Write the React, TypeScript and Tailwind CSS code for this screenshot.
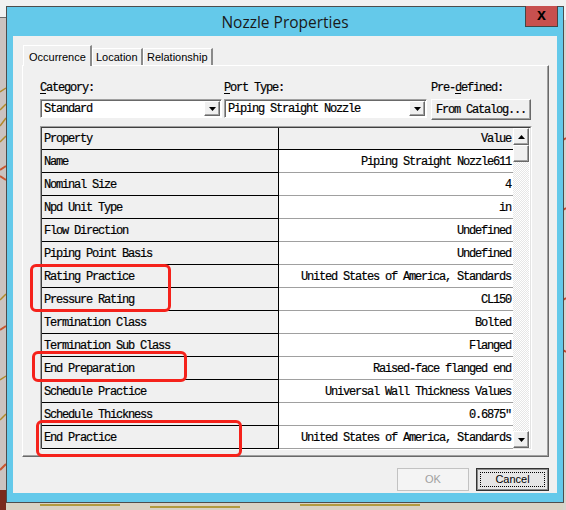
import React from 'react'

type Row = { name: string; value: string }

const rows: Row[] = [
  { name: 'Name', value: 'Piping Straight Nozzle611' },
  { name: 'Nominal Size', value: '4' },
  { name: 'Npd Unit Type', value: 'in' },
  { name: 'Flow Direction', value: 'Undefined' },
  { name: 'Piping Point Basis', value: 'Undefined' },
  { name: 'Rating Practice', value: 'United States of America, Standards' },
  { name: 'Pressure Rating', value: 'CL150' },
  { name: 'Termination Class', value: 'Bolted' },
  { name: 'Termination Sub Class', value: 'Flanged' },
  { name: 'End Preparation', value: 'Raised-face flanged end' },
  { name: 'Schedule Practice', value: 'Universal Wall Thickness Values' },
  { name: 'Schedule Thickness', value: '0.6875″' },
  { name: 'End Practice', value: 'United States of America, Standards' },
]

const mono = 'font-[Liberation_Mono,Courier_New,monospace] text-[12px] tracking-[-1.2px] text-black [-webkit-text-stroke:0.2px_black]'
const ui = 'font-[Liberation_Sans,Arial,sans-serif]'
const raised = 'border border-t-white border-l-white border-r-[#696969] border-b-[#696969] shadow-[inset_-1px_-1px_0_#a0a0a0] bg-[#f0f0f0]'
const sunken = 'border border-t-[#a0a0a0] border-l-[#a0a0a0] border-r-white border-b-white shadow-[inset_1px_1px_0_#696969] bg-white'

function Arrow({ up }: { up?: boolean }) {
  return (
    <svg width="7" height="4" viewBox="0 0 7 4">
      <path d={up ? 'M0 4 L3.5 0 L7 4 Z' : 'M0 0 L7 0 L3.5 4 Z'} fill="#000" />
    </svg>
  )
}

function Combo({ text, width }: { text: string; width: string }) {
  return (
    <div className={`${width} h-[19px] flex items-center ${sunken}`}>
      <span className={`flex-1 pl-[3px] leading-none ${mono}`}>{text}</span>
      <span className={`w-[16px] h-[15px] mr-[1px] flex items-center justify-center ${raised}`}>
        <Arrow />
      </span>
    </div>
  )
}

function Scrollbar() {
  return (
    <div className="w-[16px] flex flex-col">
      <div className={`h-[17px] flex items-center justify-center ${raised}`}><Arrow up /></div>
      <div className={`h-[17px] ${raised}`} />
      <div className="flex-1 bg-[repeating-conic-gradient(#ffffff_0_25%,#e6e6e6_0_50%)] bg-[length:2px_2px]" />
      <div className={`h-[17px] flex items-center justify-center ${raised}`}><Arrow /></div>
    </div>
  )
}

function PropertyGrid() {
  return (
    <div className="mt-[6px] w-[492px] h-[324px] border border-t-[#a0a0a0] border-l-[#a0a0a0] border-r-white border-b-white">
      <div className="flex h-full border border-t-[#404040] border-l-[#404040] border-r-[#e3e3e3] border-b-[#e3e3e3] bg-white">
        <div className="w-[471px]">
          <div className={`flex h-[22px] border-b border-black ${mono}`}>
            <div className="w-[237px] border-r border-black bg-[#f0f0f0] flex items-center pl-[2px] pt-[1px]">Property</div>
            <div className="flex-1 bg-[#f0f0f0] flex items-center justify-end pr-[2px] pt-[1px]">Value</div>
          </div>
          {rows.map(row => (
            <div key={row.name} className={`flex h-[23px] ${mono}`}>
              <div className="w-[237px] border-r border-b border-black bg-[#f0f0f0] flex items-center pl-[2px] pt-[1px] whitespace-pre">{row.name}</div>
              <div className="flex-1 border-b border-[#a0a0a0] bg-white flex items-center justify-end pr-[2px] pt-[1px] whitespace-pre">{row.value}</div>
            </div>
          ))}
        </div>
        <Scrollbar />
      </div>
    </div>
  )
}

function Backdrop() {
  return (
    <svg className="absolute inset-0" width="566" height="510" viewBox="0 0 566 510">
      <rect width="566" height="510" fill="#f1f1f1" />
      <rect x="0" y="17" width="6" height="493" fill="#cbc3c0" />
      <line x1="0" y1="17.5" x2="6" y2="17.5" stroke="#6b6b6b" />
      <path d="M0 92 L6 88 M0 110 L6 104 M0 126 L6 118 M0 142 L6 136 M0 300 L6 294 M0 380 L6 376 M0 420 L6 414" stroke="#b08a2a" strokeWidth="1.5" />
      <path d="M0 170 L6 166 M0 176 L6 180 M0 330 L6 326 M0 470 L6 464" stroke="#c9572f" strokeWidth="2" />
      <rect x="0" y="490" width="6" height="20" fill="#7a2a1e" />
      <rect x="6" y="503" width="560" height="7" fill="#d8d2c4" />
      <path d="M40 505 L120 505 M150 507 L240 507 M300 505 L420 505" stroke="#b09a40" strokeWidth="2" />
      <rect x="563" y="20" width="3" height="490" fill="#d9d2cc" />
      <path d="M563 140 L566 138 M563 210 L566 208 M563 300 L566 298 M563 350 L566 352" stroke="#c0452a" strokeWidth="2" />
    </svg>
  )
}

function Annotations() {
  return (
    <>
      <div className="absolute left-[30px] top-[264px] w-[141px] h-[48px] border-[3px] border-[#f5221b] rounded-[6px]" />
      <div className="absolute left-[32px] top-[351px] w-[155px] h-[31px] border-[3px] border-[#f5221b] rounded-[6px]" />
      <div className="absolute left-[36px] top-[420px] w-[206px] h-[37px] border-[3px] border-[#f5221b] rounded-[6px]" />
    </>
  )
}

export default function App() {
  return (
    <div className="relative w-[566px] h-[510px] overflow-hidden pl-[6px] pt-[6px]">
      <Backdrop />
      <div className="relative w-[558px] h-[497px] border border-[#4d4d4d] bg-[#64c9ea] flex flex-col">
        {/* title bar */}
        <div className="relative h-[29px] flex items-center justify-center pt-[3px]">
          <span className="font-[Open_Sans,sans-serif] text-[15.5px] text-[#1a1a1a] leading-none">Nozzle Properties</span>
          <div className="absolute right-[5px] top-[-1px] w-[33px] h-[21px] bg-[#c7504f] border border-t-0 border-[#454545] flex items-center justify-center">
            <span className={`${ui} text-[16px] font-bold leading-none text-black -mt-[3px]`}>x</span>
          </div>
        </div>

        <div className="mx-[6px] h-[457px] bg-[#f0f0f0] pl-[9px] pt-[9px] flex flex-col">
          {/* tabs */}
          <div className={`flex items-end h-[20px] ${ui} text-[11px] text-black`}>
            <div className="relative z-10 ml-[1px] -mb-[1px] h-[21px] w-[69px] bg-[#f0f0f0] border-t border-l border-white border-r-[2px] border-r-[#8a8a8a] flex items-start pt-[3px] pl-[5px]">Occurrence</div>
            <div className="h-[17px] w-[51px] bg-[#f0f0f0] border-t border-l border-white border-r-[2px] border-r-[#8a8a8a] flex items-center pl-[3px]">Location</div>
            <div className="h-[17px] w-[70px] bg-[#f0f0f0] border-t border-l border-white border-r-[2px] border-r-[#8a8a8a] flex items-center pl-[3px]">Relationship</div>
          </div>

          {/* tab page */}
          <div className="w-[527px] h-[392px] border border-t-white border-l-white border-r-[#696969] border-b-[#696969] shadow-[inset_-1px_-1px_0_#a0a0a0] pl-[17px] pt-[15px]">
            <div className={`flex h-[14px] items-center leading-none ${mono}`}>
              <span className="w-[184px]"><span className="underline underline-offset-2">C</span>ategory:</span>
              <span className="w-[207px]"><span className="underline underline-offset-2">P</span>ort Type:</span>
              <span>Pre-<span className="underline underline-offset-2">d</span>efined:</span>
            </div>
            <div className="mt-[4px] flex items-start">
              <Combo text="Standard" width="w-[182px]" />
              <div className="ml-[2px]"><Combo text="Piping Straight Nozzle" width="w-[203px]" /></div>
              <button className={`ml-[4px] w-[100px] h-[21px] flex items-center justify-center leading-none ${raised} ${mono}`}>From Catalog...</button>
            </div>
            <PropertyGrid />
          </div>

          {/* dialog buttons */}
          <div className={`mt-[11px] flex justify-end gap-[7px] pr-[8px] ${ui} text-[11px]`}>
            <button className="w-[72px] h-[23px] border border-[#c2c2c2] bg-[#f4f4f4] text-[#a0a0a0]">OK</button>
            <button className="relative w-[73px] h-[23px] border border-[#333] bg-[#e6e6e6] shadow-[inset_0_0_0_1px_#8a8a8a] text-black">
              <span className="absolute inset-[3px] border border-dotted border-black" />
              <span className="relative">Cancel</span>
            </button>
          </div>
        </div>
      </div>
      <Annotations />
    </div>
  )
}
